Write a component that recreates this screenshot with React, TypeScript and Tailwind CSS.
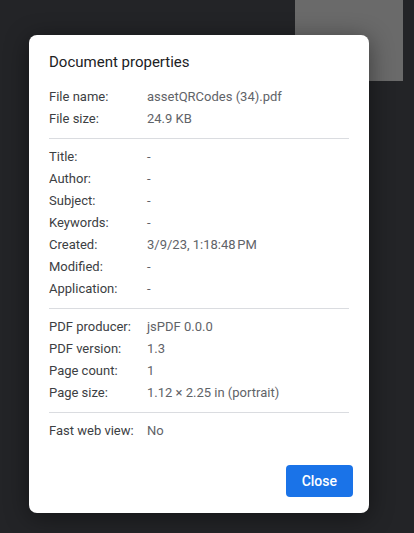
import React from 'react';

type Row = [string, string];

const groups: Row[][] = [
  [
    ['File name:', 'assetQRCodes (34).pdf'],
    ['File size:', '24.9 KB'],
  ],
  [
    ['Title:', '-'],
    ['Author:', '-'],
    ['Subject:', '-'],
    ['Keywords:', '-'],
    ['Created:', '3/9/23, 1:18:48\u202fPM'],
    ['Modified:', '-'],
    ['Application:', '-'],
  ],
  [
    ['PDF producer:', 'jsPDF 0.0.0'],
    ['PDF version:', '1.3'],
    ['Page count:', '1'],
    ['Page size:', '1.12 × 2.25 in (portrait)'],
  ],
  [['Fast web view:', 'No']],
];

export default function App() {
  return (
    <div className="relative w-[414px] h-[533px] overflow-hidden bg-[#232427] font-['Roboto','Liberation_Sans',sans-serif]">
      {/* page thumbnail behind the scrim */}
      <div className="absolute left-[295px] top-0 w-[108px] h-[81px] bg-[#6a6a6a]" />

      <div className="relative ml-[29px] mt-[35px] w-[340px] h-[478px] bg-white rounded-[8px] shadow-[0_4px_24px_rgba(0,0,0,0.45)] pt-[17px] px-[20px] pb-[16px] flex flex-col">
        <h2 className="text-[15px] leading-[20px] text-[#202124] font-normal">Document properties</h2>

        <div className="mt-[14px]">
          {groups.map((g, gi) => (
            <div key={gi}>
              {gi > 0 && <div className="h-px bg-[#dadce0] mt-[8px] mb-[7px]" />}
              {g.map(([label, value]) => (
                <div key={label} className="flex text-[13px] leading-[22px]">
                  <div className="w-[98px] shrink-0 text-[#3c4043]">{label}</div>
                  <div className="text-[#5f6368]">{value}</div>
                </div>
              ))}
            </div>
          ))}
        </div>

        <div className="mt-auto flex justify-end -mr-[4px]">
          <button className="h-[32px] px-[16px] rounded-[4px] bg-[#1a73e8] text-white text-[14px] font-medium leading-[32px]">
            Close
          </button>
        </div>
      </div>
    </div>
  );
}
